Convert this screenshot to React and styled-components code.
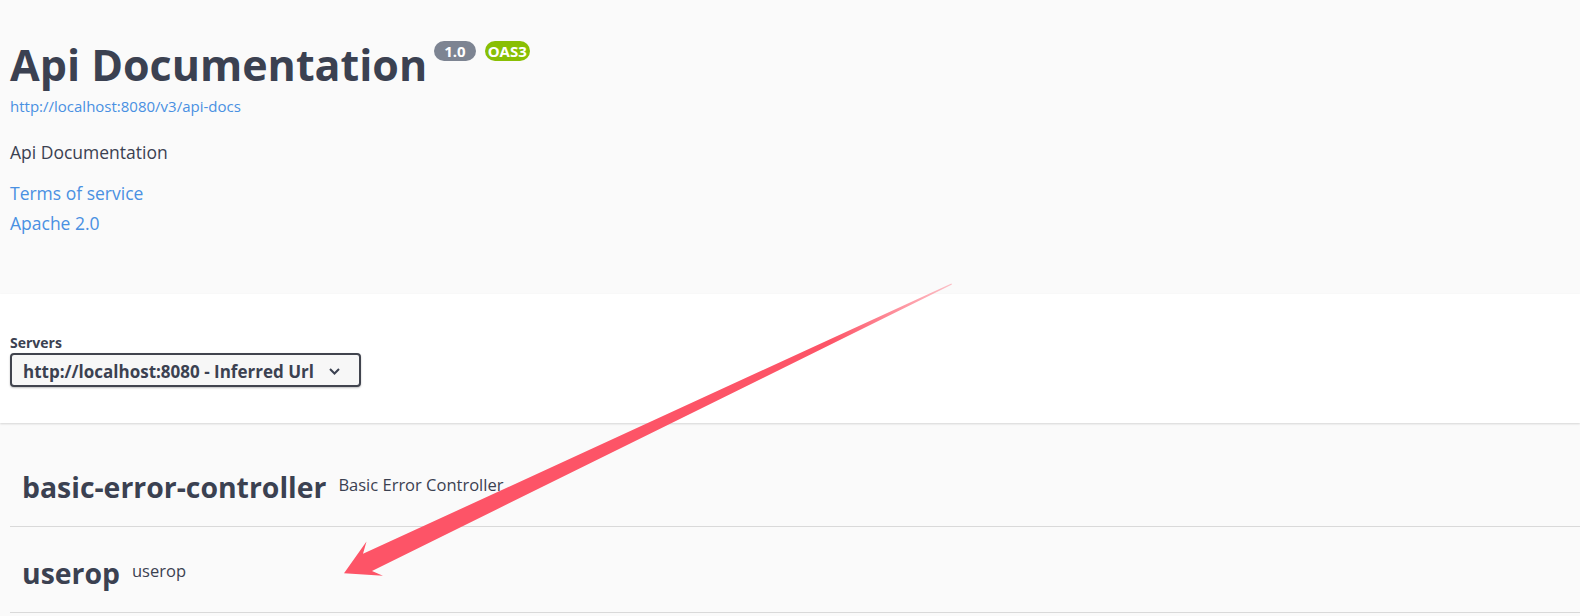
import React from "react";
import styled, { createGlobalStyle } from "styled-components";

const GlobalStyle = createGlobalStyle`
  html, body {
    margin: 0;
    padding: 0;
    background: #fafafa;
  }
  body {
    font-family: "Open Sans", "Liberation Sans", sans-serif;
    color: #3b4151;
    overflow: hidden;
  }
`;

const Page = styled.div`
  position: relative;
  width: 1580px;
  height: 616px;
  overflow: hidden;
  background: #fafafa;
`;

const Info = styled.section`
  padding: 38.3px 10px 55.7px;
`;

const TitleRow = styled.div`
  display: flex;
  align-items: flex-start;
`;

const Title = styled.h2`
  margin: 0;
  font-size: 43px;
  line-height: 54px;
  font-weight: 700;
  color: #3b4151;
`;

const Badges = styled.div`
  display: flex;
  gap: 9px;
  margin: 2.7px 0 0 7px;
`;

const Badge = styled.span`
  display: inline-block;
  height: 20px;
  line-height: 20px;
  padding: 0 ${(p) => p.$pad}px;
  border-radius: 57px;
  background: ${(p) => p.$bg};
  color: #fff;
  font-size: 15px;
  font-weight: 700;
`;

const BaseUrl = styled.a`
  display: block;
  margin-top: 5px;
  font-size: 15px;
  line-height: 18px;
  color: #4990e2;
  text-decoration: none;
`;

const Description = styled.p`
  margin: 25px 0 0;
  font-size: 17.5px;
  line-height: 24px;
  color: #3b4151;
`;

const Links = styled.div`
  margin-top: 14px;
  display: flex;
  flex-direction: column;
`;

const InfoLink = styled.a`
  font-size: 17.5px;
  line-height: 30px;
  color: #4990e2;
  text-decoration: none;
`;

const SchemeContainer = styled.section`
  background: #fff;
  box-shadow: 0 1px 2px 0 rgba(0, 0, 0, 0.15);
  padding: 40px 10px 36px;
`;

const ServersTitle = styled.span`
  display: block;
  font-size: 14px;
  line-height: 18px;
  font-weight: 700;
  margin-bottom: 1px;
`;

const Select = styled.div`
  box-sizing: border-box;
  width: 351px;
  height: 34px;
  display: flex;
  justify-content: space-between;
  align-items: flex-start;
  padding: 3px 19px 0 11px;
  border: 2px solid #41444e;
  border-radius: 4px;
  background: #f7f7f7;
  box-shadow: 0 1px 2px 0 rgba(0, 0, 0, 0.25);
  font-size: 17px;
  line-height: 27px;
  font-weight: 700;
  color: #3b4151;
  svg {
    margin-top: 10px;
  }
`;

const TagList = styled.section`
  padding: 18px 0 0 10px;
`;

const TagRow = styled.div`
  display: flex;
  align-items: center;
  padding: 26px 0 19px 12px;
  border-bottom: 1px solid #d9d9d9;
`;

const TagName = styled.h3`
  margin: 0;
  font-size: 28.4px;
  line-height: 40px;
  font-weight: 700;
  color: #3b4151;
`;

const TagDesc = styled.small`
  margin-left: 12px;
  font-size: 16.5px;
  line-height: 20px;
  margin-bottom: 4px;
  color: #3b4151;
`;

const Overlay = styled.svg`
  position: absolute;
  top: 0;
  left: 0;
  pointer-events: none;
`;

const tags = [
  { name: "basic-error-controller", desc: "Basic Error Controller" },
  { name: "userop", desc: "userop" },
];

function Chevron() {
  return (
    <svg width="11" height="7" viewBox="0 0 11 7">
      <path d="M1 1 L5.5 5.5 L10 1" fill="none" stroke="#3b4151" strokeWidth="2" />
    </svg>
  );
}

function Arrow() {
  return (
    <Overlay width="1580" height="616" viewBox="0 0 1580 616">
      <defs>
        <linearGradient id="arrowFade" gradientUnits="userSpaceOnUse" x1="344" y1="573" x2="952" y2="284">
          <stop offset="0" stopColor="#fd5467" stopOpacity="1" />
          <stop offset="0.8" stopColor="#fd5467" stopOpacity="1" />
          <stop offset="1" stopColor="#fd5467" stopOpacity="0.35" />
        </linearGradient>
      </defs>
      <polygon
        fill="url(#arrowFade)"
        points="344,573.3 366.5,541.5 363,553.8 951.4,283.5 952,284.6 372,571 382.9,575.8"
      />
    </Overlay>
  );
}

export default function App() {
  return (
    <Page>
      <GlobalStyle />
      <Info>
        <TitleRow>
          <Title>Api Documentation</Title>
          <Badges>
            <Badge $bg="#7d8492" $pad={10}>1.0</Badge>
            <Badge $bg="#89bf04" $pad={3}>OAS3</Badge>
          </Badges>
        </TitleRow>
        <BaseUrl href="#">http://localhost:8080/v3/api-docs</BaseUrl>
        <Description>Api Documentation</Description>
        <Links>
          <InfoLink href="#">Terms of service</InfoLink>
          <InfoLink href="#">Apache 2.0</InfoLink>
        </Links>
      </Info>

      <SchemeContainer>
        <ServersTitle>Servers</ServersTitle>
        <Select>
          <span>http://localhost:8080 - Inferred Url</span>
          <Chevron />
        </Select>
      </SchemeContainer>

      <TagList>
        {tags.map((t) => (
          <TagRow key={t.name}>
            <TagName>{t.name}</TagName>
            <TagDesc>{t.desc}</TagDesc>
          </TagRow>
        ))}
      </TagList>

      <Arrow />
    </Page>
  );
}
